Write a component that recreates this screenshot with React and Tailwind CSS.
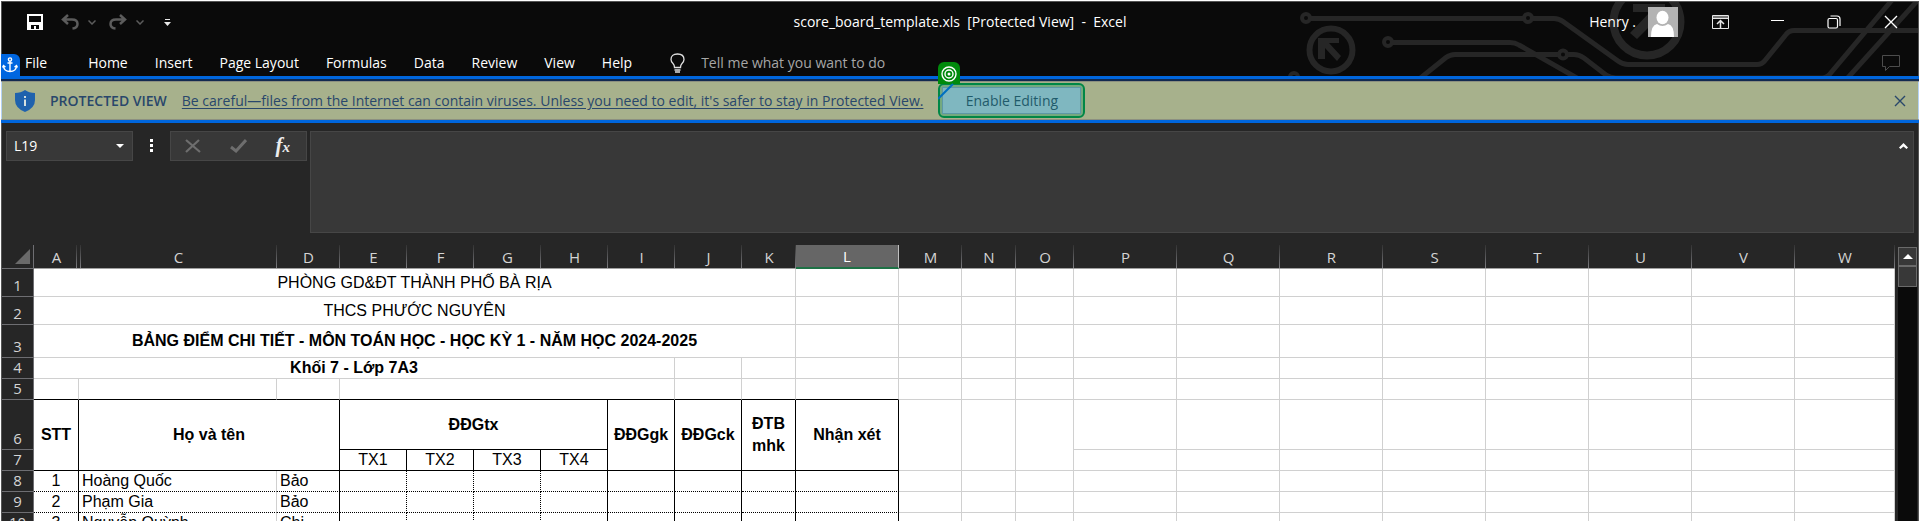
const MENU = ['Home', 'Insert', 'Page Layout', 'Formulas', 'Data', 'Review', 'View', 'Help'];

const COLUMNS = [
  ['A', 'w-[45px]'],
  ['C', 'w-[198px]'],
  ['D', 'w-[63px]'],
  ['E', 'w-[67px]'],
  ['F', 'w-[67px]'],
  ['G', 'w-[67px]'],
  ['H', 'w-[67px]'],
  ['I', 'w-[67px]'],
  ['J', 'w-[67px]'],
  ['K', 'w-[54px]'],
  ['L', 'w-[103px]'],
  ['M', 'w-[63px]'],
  ['N', 'w-[54px]'],
  ['O', 'w-[58px]'],
  ['P', 'w-[103px]'],
  ['Q', 'w-[103px]'],
  ['R', 'w-[103px]'],
  ['S', 'w-[103px]'],
  ['T', 'w-[103px]'],
  ['U', 'w-[103px]'],
  ['V', 'w-[103px]'],
  ['W', ''],
];

const STUDENTS = [
  [8, 1, 'Hoàng Quốc', 'Bảo'],
  [9, 2, 'Phạm Gia', 'Bảo'],
  [10, 3, 'Nguyễn Quỳnh', 'Chi'],
];

const GRID = 'border-r border-b border-[#d0d0d0]';
const INK = 'border-r border-b border-black';

function Circuit() {
  return (
    <svg
      className="pointer-events-none absolute top-0 right-0 h-full w-[640px]"
      viewBox="1278 2 640 74"
      preserveAspectRatio="xMaxYMin slice"
      fill="none"
      stroke="#262626"
      strokeWidth="5"
      aria-hidden="true"
    >
      <circle cx="1306" cy="18" r="4" strokeWidth="4" />
      <circle cx="1528" cy="18" r="4" strokeWidth="4" />
      <path d="M1311 18.500H1523M1533 18.500H1554Q1559 18.500 1563 21.500L1618 61Q1623 64.500 1628 64.500H1757Q1762 64.500 1765 60.500L1786 34.500Q1789 30.500 1794 30.500H1920" />
      <circle cx="1388" cy="42" r="4" strokeWidth="4" />
      <path d="M1393 42.500H1510Q1515 42.500 1519 45L1584 82" />
      <path d="M1418 80L1446 57.500Q1450 54.500 1455 54.500H1558M1568 54.500H1574Q1579 54.500 1584 58L1606 75Q1610 78 1616 78H1820Q1826 78 1829 75L1892 0" />
      <circle cx="1563" cy="54.500" r="4" strokeWidth="4" />
      <path d="M1844 82L1918 0" />
      <circle cx="1294" cy="77" r="4" strokeWidth="4" />
      <circle cx="1331" cy="50" r="21.500" strokeWidth="6" />
      <path d="M1318 38H1339V43H1329L1341 56L1337 61L1325 48V59H1318Z" fill="#262626" stroke="none" />
      <circle cx="1647" cy="22" r="33.500" strokeWidth="8" />
      <path d="M1633 4H1665V36H1657V19L1637 39L1630 33L1650 12H1633Z" fill="#262626" stroke="none" />
    </svg>
  );
}

function TitleBar() {
  return (
    <div className="relative grid h-10 grid-cols-[1fr_auto_1fr] items-center">
      <div className="flex items-center pl-[25px]">
        <button aria-label="Save">
          <svg width="16" height="16" viewBox="0 0 16 16">
            <path d="M0 0H16V16H0Z" fill="#fff" />
            <path d="M2 2H14V8H2ZM4 11H12V15H9V12H7V15H4Z" fill="#0a0a0a" />
          </svg>
        </button>
        <button aria-label="Undo" className="ml-[18px]">
          <svg width="18" height="16" viewBox="0 0 18 16" fill="none" stroke="#5c5c5c" strokeWidth="2.500">
            <path d="M7 1L2 5.500L7 10M2 5.500H11Q16.500 5.500 16.500 10Q16.500 14 11.500 14.500" />
          </svg>
        </button>
        <button aria-label="Undo history" className="ml-[9px]">
          <svg width="8" height="5" viewBox="0 0 8 5" fill="none" stroke="#5c5c5c" strokeWidth="1.500">
            <path d="M0.500 0.500L4 4L7.500 0.500" />
          </svg>
        </button>
        <button aria-label="Redo" className="ml-[13px]">
          <svg width="18" height="16" viewBox="0 0 18 16" fill="none" stroke="#5c5c5c" strokeWidth="2.500">
            <path d="M11 1L16 5.500L11 10M16 5.500H7Q1.500 5.500 1.500 10Q1.500 14 6.500 14.500" />
          </svg>
        </button>
        <button aria-label="Redo history" className="ml-[9px]">
          <svg width="8" height="5" viewBox="0 0 8 5" fill="none" stroke="#5c5c5c" strokeWidth="1.500">
            <path d="M0.500 0.500L4 4L7.500 0.500" />
          </svg>
        </button>
        <button aria-label="Customize toolbar" className="ml-5">
          <svg width="7" height="7" viewBox="0 0 7 7" fill="#e8e8e8">
            <path d="M1 0H6V1H1ZM0 3H7L3.500 7Z" />
          </svg>
        </button>
      </div>
      <h1 className="text-[14px] leading-5 whitespace-pre text-white">
        {'score_board_template.xls  [Protected View]  -  Excel'}
      </h1>
      <div className="flex items-center justify-end pr-5 text-white">
        <span className="mr-3 text-[14px] leading-5">Henry .</span>
        <svg className="mr-[34px]" width="30" height="30" viewBox="0 0 30 30" aria-hidden="true">
          <path d="M0 0H30V30H0Z" fill="#b3b3b3" />
          <ellipse cx="14.500" cy="10.500" rx="6" ry="6.700" fill="#fff" />
          <path d="M3 30Q3 18 9 17Q14.500 21 20 17Q26 18 26 30Z" fill="#fff" />
        </svg>
        <button aria-label="Ribbon display options" className="mr-[42px]">
          <svg width="17" height="14" viewBox="0 0 17 14" fill="none" stroke="#e8e8e8">
            <path d="M0.500 0.500H16.500V13.500H0.500ZM0.500 3.500H16.500M0.500 2H16.500" />
            <path d="M8.500 13V6M5 9L8.500 5.500L12 9" strokeWidth="1.500" />
          </svg>
        </button>
        <button aria-label="Minimize" className="mr-[43px]">
          <svg width="13" height="14" viewBox="0 0 13 14" fill="#fff">
            <path d="M0 5H13V6H0Z" />
          </svg>
        </button>
        <button aria-label="Restore" className="mr-[43px]">
          <svg width="14" height="14" viewBox="0 0 14 14" fill="none" stroke="#fff" strokeWidth="1.200">
            <rect x="1" y="3.500" width="9.500" height="9.500" rx="1.500" />
            <path d="M3.500 1H10Q13 1 13 4V11" />
          </svg>
        </button>
        <button aria-label="Close">
          <svg width="14" height="14" viewBox="0 0 14 14" stroke="#fff" strokeWidth="1.400">
            <path d="M1 1L13 13M13 1L1 13" />
          </svg>
        </button>
      </div>
    </div>
  );
}

function MenuBar() {
  return (
    <nav className="relative flex h-[34px] items-center pt-2 text-[14px] leading-5 text-white">
      <div className="absolute bottom-0 -left-0.5 z-10 flex h-[22px] w-5 items-center justify-center rounded-tr-md bg-[#0066e0]">
        <svg width="16" height="16" viewBox="0 0 16 16" fill="none" stroke="#fff" strokeWidth="1.400" aria-hidden="true">
          <circle cx="8" cy="2.500" r="1.600" />
          <path d="M8 4V14.500M5.500 6H10.500M1.500 9Q2 14.500 8 14.500Q14 14.500 14.500 9M0.500 10.500L1.500 8.500L3.500 10M15.500 10.500L14.500 8.500L12.500 10" />
        </svg>
      </div>
      <button className="mr-[41px] pl-[23px]">File</button>
      <div className="flex gap-[27px]">
        {MENU.map((m) => (
          <button key={m}>{m}</button>
        ))}
      </div>
      <svg className="ml-[38px]" width="15" height="20" viewBox="0 0 15 20" fill="none" stroke="#e0e0e0" strokeWidth="1.300" aria-hidden="true">
        <path d="M4.500 14.500Q4.500 12 3 10.500Q1 8.500 1 6.500Q1 1 7.500 1Q14 1 14 6.500Q14 8.500 12 10.500Q10.500 12 10.500 14.500ZM4.500 17H10.500M5 19H10" />
      </svg>
      <input
        aria-label="Tell me what you want to do"
        className="ml-4 w-60 bg-transparent outline-none placeholder:text-[#a6a6a6]"
        placeholder="Tell me what you want to do"
      />
      <button aria-label="Comments" className="mr-[18px] ml-auto">
        <svg width="18" height="17" viewBox="0 0 18 17" fill="none" stroke="#4c4c4c">
          <path d="M0.500 0.500H17.500V11.500H7.500L3.500 15.500V11.500H0.500Z" />
        </svg>
      </button>
    </nav>
  );
}

function MessageBar() {
  return (
    <section className="relative -mx-0.5 border-y-[3px] border-[#0066dd] bg-[#122a50] pt-0.5 text-[#29476b]">
      <div className="flex h-[39px] items-center border-x-2 border-y border-x-[#b5d2f5] border-y-[#8c9080] bg-[#a7b18c] pl-[13px] text-[14px] leading-5">
        <svg width="20" height="22" viewBox="0 0 20 22" aria-hidden="true">
          <path d="M10 0Q14 3 20 3V10Q20 18 10 22Q0 18 0 10V3Q6 3 10 0Z" fill="#1f62ad" />
          <path d="M9 6H11V8H9ZM9 9.500H11V16H9Z" fill="#d5e0e0" />
        </svg>
        <strong className="ml-[15px] font-semibold">PROTECTED VIEW</strong>
        <a href="#protected-view" className="ml-[15px] whitespace-nowrap underline underline-offset-2">
          Be careful—files from the Internet can contain viruses. Unless you need to edit, it's safer to stay in Protected View.
        </a>
        <div className="relative ml-[15px] rounded-md border-2 border-[#008746] bg-[#74a97f] p-0.5">
          <button className="block h-[27px] w-[139px] border border-[#5d98a6] bg-[#7fb7c0] text-[#1f5b6b]">
            Enable Editing
          </button>
          <span className="absolute -top-[23px] -left-0.5 flex h-[22px] w-[22px] justify-center rounded-t-md bg-[#008a0c] pt-1">
            <svg width="16" height="16" viewBox="0 0 16 16" fill="none" stroke="#fff" strokeWidth="1.400" aria-hidden="true">
              <circle cx="8" cy="8" r="7" />
              <circle cx="8" cy="8" r="4" />
              <circle cx="8" cy="8" r="1.500" fill="#fff" stroke="none" />
            </svg>
          </span>
          <svg className="absolute -top-0.5 -left-0.5" width="18" height="18" viewBox="0 0 18 18" stroke="#0070c0" strokeWidth="2" aria-hidden="true">
            <path d="M0 16L15 1" />
          </svg>
        </div>
        <button aria-label="Close message" className="mr-3 ml-auto">
          <svg width="12" height="12" viewBox="0 0 12 12" stroke="#29476b" strokeWidth="1.400">
            <path d="M1 1L11 11M11 1L1 11" />
          </svg>
        </button>
      </div>
    </section>
  );
}

function FormulaBar() {
  return (
    <section className="flex items-start pt-2 pr-1 pb-3 pl-1 text-white">
      <div className="flex h-[30px] w-[127px] items-center border border-[#464646] bg-[#383838] pr-2 pl-[7px]">
        <input aria-label="Name box" defaultValue="L19" className="min-w-0 flex-1 bg-transparent text-[14px] leading-5 outline-none" />
        <button aria-label="Name list">
          <svg width="8" height="4" viewBox="0 0 8 4" fill="#fff">
            <path d="M0 0H8L4 4Z" />
          </svg>
        </button>
      </div>
      <svg className="mt-2 ml-[17px]" width="3" height="13" viewBox="0 0 3 13" fill="#fff" aria-hidden="true">
        <path d="M0 0H3V3H0ZM0 5H3V8H0ZM0 10H3V13H0Z" />
      </svg>
      <div className="ml-[17px] flex h-[30px] w-[137px] items-center justify-between border border-[#464646] bg-[#383838] pr-4 pl-[14px]">
        <button aria-label="Cancel">
          <svg width="16" height="14" viewBox="0 0 16 14" stroke="#6e6e6e" strokeWidth="2.200">
            <path d="M1 1L15 13M14 1L1 13" />
          </svg>
        </button>
        <button aria-label="Enter">
          <svg width="17" height="14" viewBox="0 0 17 14" fill="none" stroke="#6e6e6e" strokeWidth="3">
            <path d="M1 8L6 12L16 1" />
          </svg>
        </button>
        <button aria-label="Insert function" className="font-['Liberation_Serif',serif] text-[21px] leading-5 font-bold text-[#ececec] italic">
          f<span className="text-[15px]">x</span>
        </button>
      </div>
      <div className="ml-[3px] flex h-[102px] flex-1 items-start border border-[#464646] bg-[#383838]">
        <textarea aria-label="Formula" className="h-full flex-1 resize-none bg-transparent outline-none" />
        <button aria-label="Collapse formula bar" className="mt-[11px] mr-[5px]">
          <svg width="9" height="6" viewBox="0 0 9 6" fill="#fff">
            <path d="M0 4.500L4.500 0L9 4.500L7.500 6L4.500 3.500L1.500 6Z" />
          </svg>
        </button>
      </div>
    </section>
  );
}

function ColumnHead({ name }) {
  if (name === 'L') {
    return (
      <th scope="col" className="h-6 border-r border-b-2 border-r-[#c0c0c0] border-b-[#1e7145] bg-[#666666] font-normal text-white">
        L
      </th>
    );
  }
  const rule = name === 'A' ? 'bg-[position:42px_0]' : 'bg-right';
  return (
    <th
      scope="col"
      className={`h-6 border-b border-[#a0a0a0] bg-[linear-gradient(#333,#7c7c80)] bg-[length:1px_100%] bg-no-repeat font-normal ${rule}`}
    >
      {name === 'C' ? (
        <div className="ml-px flex h-[23px] items-center justify-center bg-[linear-gradient(#333,#7c7c80)] bg-[length:1px_100%] bg-left bg-no-repeat">C</div>
      ) : (
        name
      )}
    </th>
  );
}

function RowHead({ n, height }) {
  return (
    <th scope="row" className={`${height} border-r border-b border-[#6e6e72] bg-[#262626] pb-0.5 align-bottom text-[15px] leading-[18px] font-normal text-[#d4d4d4]`}>
      {n}
    </th>
  );
}

function Blank({ count, span = 1 }) {
  return Array.from({ length: count }, (_, i) => <td key={i} rowSpan={span} className={GRID} />);
}

function Sheet() {
  return (
    <div className="min-w-0 flex-1 overflow-hidden">
      <table className="w-full table-fixed border-separate border-spacing-0 bg-white font-['Liberation_Sans',Arial,sans-serif] text-[16px] leading-5 text-black">
        <colgroup>
          <col className="w-8" />
          {COLUMNS.map(([name, width]) => (
            <col key={name} className={width} />
          ))}
        </colgroup>
        <thead className="bg-[#262626] font-['Open_Sans',sans-serif] text-[15px] leading-5 text-[#d4d4d4]">
          <tr>
            <td className="border-r border-b border-[#6e6e72]">
              <svg className="mr-[3px] ml-auto" width="15" height="15" viewBox="0 0 15 15" fill="#6a6a6a" aria-hidden="true">
                <path d="M15 0V15H0Z" />
              </svg>
            </td>
            {COLUMNS.map(([name]) => (
              <ColumnHead key={name} name={name} />
            ))}
          </tr>
        </thead>
        <tbody className="[&_th]:font-['Open_Sans',sans-serif]">
          <tr>
            <RowHead n={1} height="h-7" />
            <td colSpan={10} className={`${GRID} text-center`}>PHÒNG GD&amp;ĐT THÀNH PHỐ BÀ RỊA</td>
            <Blank count={12} />
          </tr>
          <tr>
            <RowHead n={2} height="h-7" />
            <td colSpan={10} className={`${GRID} text-center`}>THCS PHƯỚC NGUYÊN</td>
            <Blank count={12} />
          </tr>
          <tr>
            <RowHead n={3} height="h-[33px]" />
            <td colSpan={10} className={`${GRID} text-center font-bold`}>BẢNG ĐIỂM CHI TIẾT - MÔN TOÁN HỌC - HỌC KỲ 1 - NĂM HỌC 2024-2025</td>
            <Blank count={12} />
          </tr>
          <tr>
            <RowHead n={4} height="h-[21px]" />
            <td colSpan={8} className={`${GRID} text-center font-bold`}>Khối 7 - Lớp 7A3</td>
            <Blank count={14} />
          </tr>
          <tr className="[&>td:nth-child(-n+8)]:border-b-black">
            <RowHead n={5} height="h-[21px]" />
            <Blank count={3} />
            <td colSpan={5} className={GRID} />
            <Blank count={14} />
          </tr>
          <tr className="text-center font-bold">
            <RowHead n={6} height="h-[50px]" />
            <td rowSpan={2} className={INK}>STT</td>
            <td rowSpan={2} colSpan={2} className={INK}>Họ và tên</td>
            <td colSpan={4} className={INK}>ĐĐGtx</td>
            <td rowSpan={2} className={INK}>ĐĐGgk</td>
            <td rowSpan={2} className={INK}>ĐĐGck</td>
            <td rowSpan={2} className={`${INK} leading-[22px]`}>ĐTB mhk</td>
            <td rowSpan={2} className={INK}>Nhận xét</td>
            <Blank count={3} span={2} />
            <Blank count={8} />
          </tr>
          <tr className="text-center">
            <RowHead n={7} height="h-[21px]" />
            {['TX1', 'TX2', 'TX3', 'TX4'].map((t) => (
              <td key={t} className={INK}>{t}</td>
            ))}
            <Blank count={8} />
          </tr>
          {STUDENTS.map(([row, no, family, given]) => (
            <tr key={row}>
              <RowHead n={row} height="h-[21px]" />
              <td className="border-r border-b border-black text-center [border-bottom-style:dotted]">{no}</td>
              <td className="border-r border-b border-r-[#d0d0d0] border-b-black pl-[3px] [border-bottom-style:dotted]">{family}</td>
              <td className="border-r border-b border-black pl-[3px] [border-bottom-style:dotted]">{given}</td>
              {[1, 2, 3].map((i) => (
                <td key={i} className="border-r border-b border-dotted border-black" />
              ))}
              {[4, 5, 6, 7, 8].map((i) => (
                <td key={i} className="border-r border-b border-black [border-bottom-style:dotted]" />
              ))}
              <Blank count={11} />
            </tr>
          ))}
        </tbody>
      </table>
    </div>
  );
}

export default function App() {
  return (
    <div className="h-screen overflow-hidden border-x border-t border-white bg-white font-['Open_Sans','Noto_Sans',sans-serif]">
      <div className="flex h-full flex-col border-x border-t border-[#555] bg-[#262626]">
        <header className="relative shrink-0 bg-[#0a0a0a]">
          <Circuit />
          <TitleBar />
          <MenuBar />
        </header>
        <MessageBar />
        <FormulaBar />
        <main className="flex min-h-0 flex-1">
          <Sheet />
          <div className="mt-0.5 mr-px ml-[3px] flex w-[19px] flex-col bg-[#0a0a0a]">
            <button aria-label="Scroll up" className="flex h-[19px] items-center justify-center border border-[#6a6a6a] bg-[#383838]">
              <svg width="10" height="5" viewBox="0 0 10 5" fill="#fff" aria-hidden="true">
                <path d="M5 0L10 5H0Z" />
              </svg>
            </button>
            <div className="h-[21px] border border-[#6a6a6a] bg-[#383838]" />
          </div>
        </main>
      </div>
    </div>
  );
}
